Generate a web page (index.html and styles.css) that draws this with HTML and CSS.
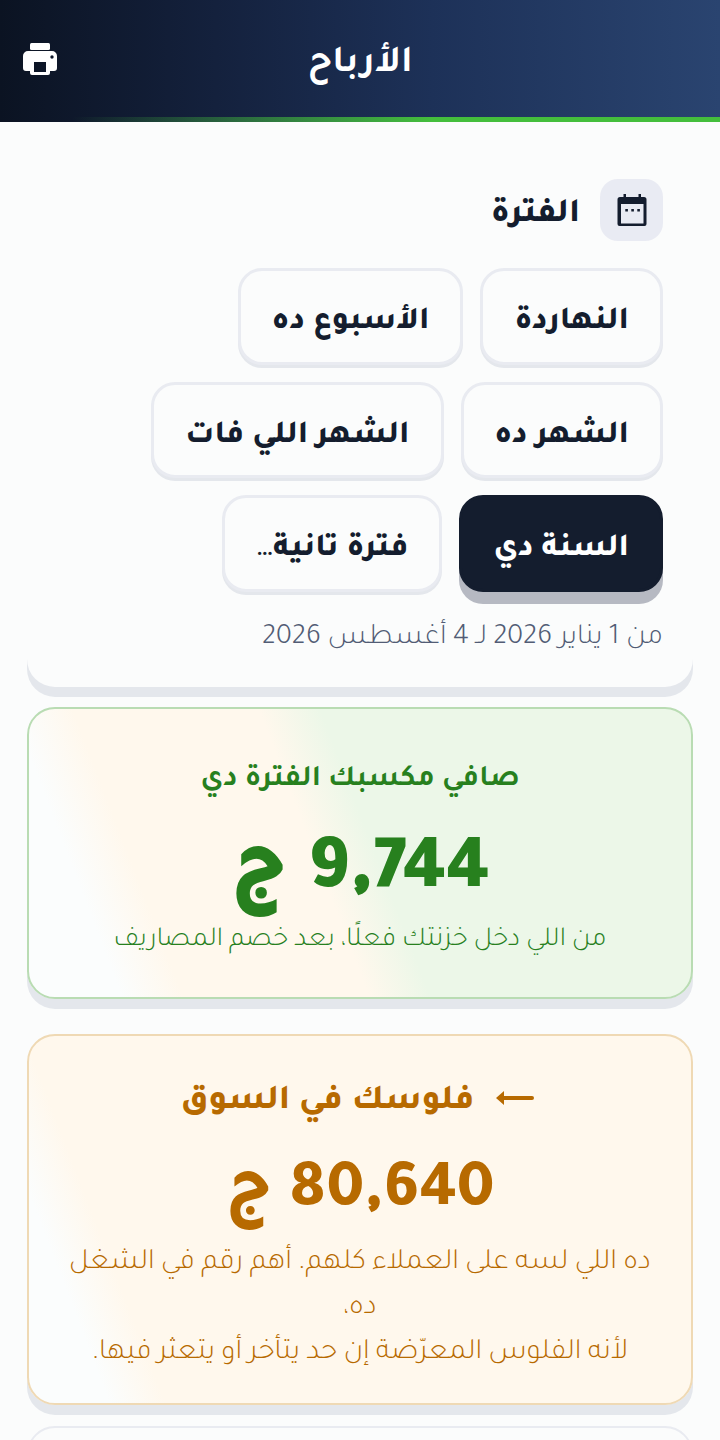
FILE: index.html
```html
<!DOCTYPE html>
<html lang="ar" dir="rtl">
<head>
    <meta charset="UTF-8">
    <meta name="viewport" content="width=device-width, initial-scale=1.0">
    <title>الأرباح</title>
    <link rel="stylesheet" href="styles.css">
</head>
<body>

<header class="topbar">
    <h1 class="topbar-title">الأرباح</h1>
    <button class="print-btn" aria-label="طباعة">
        <svg viewBox="0 0 36 36" width="36" height="36" fill="#fff">
            <rect x="8" y="2" width="20" height="7" rx="1.500"/>
            <path fill-rule="evenodd" d="M6 10h24a5 5 0 0 1 5 5v12a3 3 0 0 1-3 3h-4v2a2 2 0 0 1-2 2H10a2 2 0 0 1-2-2v-2H4a3 3 0 0 1-3-3V15a5 5 0 0 1 5-5Zm6 11v10h12V21H12Zm18-6.700a1.700 1.700 0 1 0 0 3.400 1.700 1.700 0 0 0 0-3.400Z"/>
        </svg>
    </button>
</header>

<main class="content">
    <section class="card period">
        <div class="period-head">
            <span class="period-icon">
                <svg viewBox="0 0 32 32" width="32" height="32">
                    <path fill="#141d2e" d="M7.500 0H10v3h12.500V0H25v3h3a2.500 2.500 0 0 1 2.500 2.500V30a2 2 0 0 1-2 2h-25a2 2 0 0 1-2-2V5.500A2.500 2.500 0 0 1 4 3h3.500V0Z"/>
                    <path fill="#e9ebf3" d="M5 10h22.500v19.500H5z"/>
                    <path fill="#141d2e" d="M9.300 15h2.600v2.600H9.300zM15.300 15h2.600v2.600h-2.600zM21.300 15h2.600v2.600h-2.600z"/>
                </svg>
            </span>
            <h2 class="period-title">الفترة</h2>
        </div>
        <div class="chips">
            <button class="chip">النهاردة</button>
            <button class="chip">الأسبوع ده</button>
            <button class="chip">الشهر ده</button>
            <button class="chip">الشهر اللي فات</button>
            <button class="chip active">السنة دي</button>
            <button class="chip">فترة تانية<span class="dots">…</span></button>
        </div>
        <p class="range">من 1 يناير 2026 لـ 4 أغسطس 2026</p>
    </section>

    <section class="card stat profit">
        <h3 class="stat-label">صافي مكسبك الفترة دي</h3>
        <div class="stat-value"><span class="num">9,744</span> ج</div>
        <p class="stat-note">من اللي دخل خزنتك فعلًا، بعد خصم المصاريف</p>
    </section>

    <section class="card stat market">
        <h3 class="stat-label">
            <svg class="arrow" viewBox="0 0 38 14" width="38" height="14" fill="#b76a00">
                <path d="M8 0 0 7l8 7V9h28a2 2 0 0 0 0-4H8V0Z"/>
            </svg>
            فلوسك في السوق
        </h3>
        <div class="stat-value"><span class="num">80,640</span> ج</div>
        <p class="stat-note">ده اللي لسه على العملاء كلهم. أهم رقم في الشغل ده،<br>لأنه الفلوس المعرّضة إن حد يتأخر أو يتعثر فيها.</p>
    </section>

    <section class="card next"></section>
</main>

</body>
</html>
```
FILE: styles.css
```css
* {
    box-sizing: border-box;
}
html, body {
    height: 1440px;
    overflow: hidden;
}
body {
    margin: 0;
    background-color: #fbfcfc;
    color: #141d2e;
    font-family: "Tajawal", "Noto Sans", sans-serif;
}
.topbar {
    height: 122px;
    display: flex;
    align-items: center;
    justify-content: center;
    position: relative;
    background: linear-gradient(90deg, #0b1322 0%, #14213d 30%, #1d3158 60%, #2a4470 100%);
}
.topbar::after {
    content: "";
    position: absolute;
    left: 0;
    right: 0;
    bottom: 0;
    height: 5px;
    background: linear-gradient(90deg, rgba(68, 190, 60, 0) 10%, #44be3c 60%);
}
.topbar-title {
    margin: 10px 0 0;
    font-size: 38px;
    font-weight: 700;
    color: #fff;
}
.print-btn {
    position: absolute;
    left: 22px;
    top: 41px;
    padding: 0;
    border: none;
    background: none;
}
.content {
    padding: 57px 27px 0;
    display: flex;
    flex-direction: column;
}
.card {
    border-radius: 28px;
    box-shadow: 0 10px 0 #e4e7ec;
}
.period {
    height: 508px;
    margin-bottom: 20px;
    padding: 0 30px;
    background-color: #fbfcfc;
}
.period-head {
    display: flex;
    align-items: center;
    gap: 20px;
    height: 62px;
    margin-bottom: 27px;
}
.period-icon {
    width: 63px;
    height: 62px;
    border-radius: 18px;
    background-color: #e9ebf3;
    display: flex;
    align-items: center;
    justify-content: center;
}
.period-title {
    margin: 12px 0 0;
    font-size: 34px;
    font-weight: 800;
}
.chips {
    display: flex;
    flex-wrap: wrap;
    gap: 17px;
}
.chip {
    height: 96.500px;
    padding: 14px 31px 0;
    border: 3px solid #e9ebf1;
    border-radius: 24px;
    background-color: #fbfcfc;
    box-shadow: 0 3px 0 #e4e7ec;
    color: #141d2e;
    font: 800 32px "Tajawal", "Noto Sans", sans-serif;
}
.chip.active {
    background-color: #141d2e;
    border-color: #141d2e;
    color: #fff;
    box-shadow: 0 12px 0 #b6b9c2;
}
.dots {
    font-size: 19px;
}
.range {
    margin: 29px 0 0;
    font-size: 29.200px;
    font-weight: 300;
    color: #525c75;
}
.stat {
    text-align: center;
}
.profit {
    height: 292px;
    margin-bottom: 35px;
    padding-top: 54px;
    border: 2px solid #b9dcb3;
    background: linear-gradient(69deg, #fbfdfd 12%, #fff8ed 20%, #fff8ed 44%, #ecf7e8 52%);
    color: #27801e;
}
.market {
    height: 371px;
    margin-bottom: 21px;
    padding-top: 46px;
    border: 2px solid #efd9b4;
    background: linear-gradient(69deg, #fbfdfd 10%, #fff8ed 17%);
    color: #b76a00;
}
.next {
    height: 100px;
    border: 2px solid #e9ebf1;
}
.stat-label {
    margin: 0;
    font-size: 30px;
    font-weight: 700;
}
.market .stat-label {
    padding-right: 5px;
    font-size: 35px;
    font-weight: 800;
}
.arrow {
    margin-left: 13px;
    vertical-align: 3px;
}
.stat-value {
    margin-top: 25px;
    height: 95px;
    font-size: 84px;
    font-weight: 900;
    line-height: 100px;
}
.num {
    font-size: 78px;
    letter-spacing: -3.500px;
}
.market .stat-value {
    margin-top: 24px;
    height: 94px;
    font-size: 70px;
    font-weight: 800;
    line-height: 92px;
}
.market .num {
    font-size: 67px;
    letter-spacing: -1px;
}
.stat-note {
    margin: 0;
    padding: 0 30px;
    font-size: 27.500px;
    font-weight: 300;
    line-height: 44.800px;
}
.market .stat-note {
    font-size: 29.300px;
}
```
